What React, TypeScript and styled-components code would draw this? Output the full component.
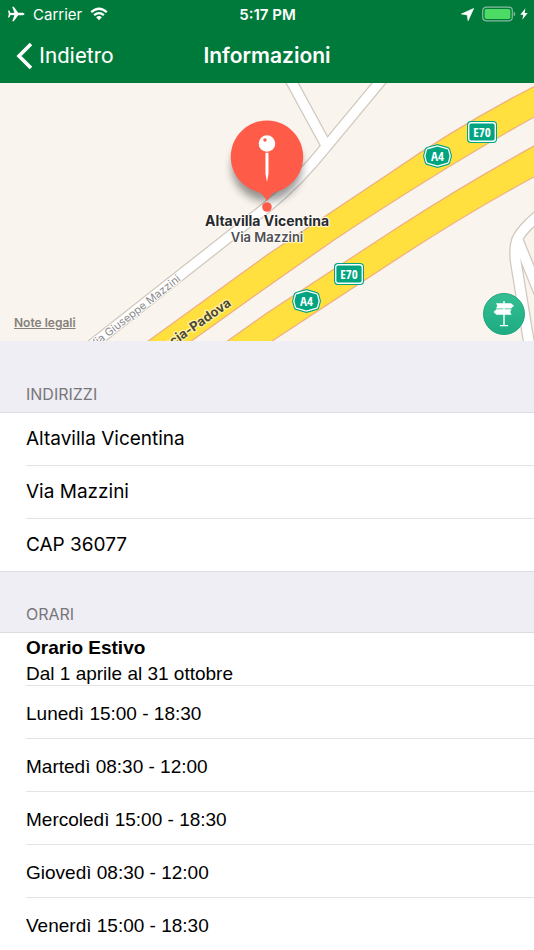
import React from "react";
import styled, { createGlobalStyle } from "styled-components";

const GlobalStyle = createGlobalStyle`
  *, *::before, *::after { box-sizing: border-box; }
  body {
    margin: 0;
    background: #efeef4;
    font-family: Inter, "Liberation Sans", sans-serif;
    color: #000;
  }
`;

const Header = styled.header`
  background: #007a3b;
  color: #fff;
`;

const StatusBar = styled.div`
  display: grid;
  grid-template-columns: 1fr auto 1fr;
  align-items: center;
  height: 28px;
  padding: 0 6px 0 7px;
  font-size: 15px;
`;

const StatusGroup = styled.div<{ $end?: boolean }>`
  display: flex;
  align-items: center;
  gap: 8px;
  justify-content: ${(p) => (p.$end ? "flex-end" : "flex-start")};
`;

const Clock = styled.time`
  font-weight: 600;
`;

const Battery = styled.span`
  display: flex;
  align-items: center;
  gap: 4px;
`;

const NavBar = styled.nav`
  display: grid;
  grid-template-columns: 1fr auto 1fr;
  align-items: center;
  height: 55px;
  padding: 0 16px;
`;

const BackButton = styled.button`
  display: flex;
  align-items: center;
  gap: 6px;
  justify-self: start;
  padding: 0;
  border: 0;
  background: none;
  color: inherit;
  font-family: Roboto, sans-serif;
  font-size: 22px;
  line-height: 28px;
  cursor: pointer;
`;

const Title = styled.h1`
  margin: 0;
  font-size: 21px;
  line-height: 28px;
  font-weight: 600;
`;

const MapArea = styled.section`
  position: relative;
  height: 258px;
  overflow: hidden;
  background: #f9f4ed;
`;

const MapDrawing = styled.svg`
  display: block;
  width: 100%;
  height: 100%;
`;

const Marker = styled.div`
  position: absolute;
  left: 50%;
  top: 32px;
  transform: translateX(-50%);
  display: flex;
  flex-direction: column;
  align-items: center;
  white-space: nowrap;
  text-shadow: 0 0 2px #fff, 1px 0 1px #fff, -1px 0 1px #fff, 0 1px 1px #fff, 0 -1px 1px #fff;
`;

const MarkerName = styled.strong`
  font-size: 14px;
  line-height: 16px;
  font-weight: 700;
  color: #29292b;
`;

const MarkerStreet = styled.span`
  font-size: 13px;
  line-height: 16px;
  font-weight: 600;
  color: #505052;
`;

const LegalLink = styled.a`
  position: absolute;
  left: 14px;
  bottom: 10px;
  font-size: 12px;
  line-height: 16px;
  font-weight: 600;
  color: #85817b;
`;

const DirectionsButton = styled.button`
  position: absolute;
  right: 9px;
  bottom: 6px;
  display: grid;
  place-items: center;
  width: 42px;
  height: 42px;
  padding: 0;
  border: 1px solid #1ca67c;
  border-radius: 50%;
  background: linear-gradient(#35bd93, #1eac82);
  cursor: pointer;
`;

const SectionHeader = styled.h2<{ $first?: boolean }>`
  display: flex;
  align-items: flex-end;
  height: ${(p) => (p.$first ? 72 : 61)}px;
  margin: 0;
  padding: 0 26px 8px;
  border-bottom: 1px solid #dddce1;
  font-size: 16px;
  line-height: 20px;
  font-weight: 400;
  color: #77767b;
`;

const List = styled.ul<{ $helvetica?: boolean; $closed?: boolean }>`
  margin: 0;
  padding: 0;
  list-style: none;
  background: #fff;
  border-bottom: ${(p) => (p.$closed ? "1px solid #dddce1" : "0")};
  font-family: ${(p) => (p.$helvetica ? '"Liberation Sans", sans-serif' : 'Inter, sans-serif')};
  font-size: 19px;
  line-height: 26px;
`;

const Row = styled.li<{ $lowered?: boolean }>`
  display: flex;
  flex-direction: column;
  justify-content: center;
  height: 52px;
  margin-left: 26px;
  padding-top: ${(p) => (p.$lowered ? 4 : 0)}px;

  &:not(:last-child) {
    height: 53px;
    border-bottom: 1px solid #e4e4e6;
  }
`;

const addresses = ["Altavilla Vicentina", "Via Mazzini", "CAP 36077"];
const hours = [
  "Lunedì 15:00 - 18:30",
  "Martedì 08:30 - 12:00",
  "Mercoledì 15:00 - 18:30",
  "Giovedì 08:30 - 12:00",
  "Venerdì 15:00 - 18:30",
];

const localRoads = [
  "M384 -6 L326 64 Q298 99 267 124 L178 194 L88 265",
  "M290 -4 L326 62",
  "M542 129 L529 141 Q519 151 517 157 Q514 166 516 180 L530 266",
  "M517 155 L541 214",
];
const motorways = [
  "M545 -2 Q465 38 387 92 L267 172 L140 264 L183 264 L267 204 L334 157 Q452 79 545 28 Z",
  "M545 57 Q470 98 400 143 L267 230 L219 264 L263 264 L400 174 Q475 125 545 88 Z",
];

function EuroShield({ x, y }: { x: number; y: number }) {
  return (
    <g transform={`translate(${x} ${y})`}>
      <rect width="30" height="22" rx="4" fill="#00a481" />
      <rect x="1.7" y="1.7" width="26.6" height="18.6" rx="2.5" fill="none" stroke="#fff" strokeWidth="1.4" />
      <ShieldText x={15}>E70</ShieldText>
    </g>
  );
}

function MotorwayShield({ x, y }: { x: number; y: number }) {
  return (
    <g transform={`translate(${x} ${y})`}>
      <path d="M4 3 L14.5 0 L25 3 Q27 3.500 27.300 5.500 L29 12 L27.300 18.500 Q27 20.500 25 21 L14.500 24 L4 21 Q2 20.500 1.700 18.500 L0 12 L1.700 5.500 Q2 3.500 4 3Z" fill="#00a481" />
      <path d="M5 4.500 L14.500 1.900 L24 4.500 Q25.500 5 25.800 6.300 L27.200 12 L25.800 17.700 Q25.500 19 24 19.500 L14.500 22.100 L5 19.500 Q3.500 19 3.200 17.700 L1.800 12 L3.200 6.300 Q3.500 5 5 4.500Z" fill="none" stroke="#fff" strokeWidth="1.3" />
      <ShieldText x={14.5} y={17}>A4</ShieldText>
    </g>
  );
}

function ShieldText({ x, y = 16, children }: { x: number; y?: number; children: string }) {
  return (
    <text x={x} y={y} textAnchor="middle" fill="#fff" fontFamily='"Open Sans Condensed", Roboto, sans-serif' fontSize="13" fontWeight="700">
      {children}
    </text>
  );
}

function StreetMap() {
  return (
    <MapDrawing viewBox="0 0 534 258" preserveAspectRatio="xMidYMid slice" aria-label="Mappa di Altavilla Vicentina">
      <g fill="none" stroke="#d0c8bd" strokeWidth="12">
        {localRoads.map((d) => <path key={d} d={d} />)}
      </g>
      <g fill="none" stroke="#fff" strokeWidth="9.5">
        {localRoads.map((d) => <path key={d} d={d} />)}
      </g>
      <g fill="#ffe03f" stroke="#efae80" strokeWidth="1.2">
        {motorways.map((d) => <path key={d} d={d} />)}
      </g>
      <g stroke="#fff" strokeLinejoin="round" paintOrder="stroke">
        <text transform="translate(182 198) rotate(-38)" textAnchor="end" y="-1" fontFamily="Inter, sans-serif" fontSize="11" fill="#8a8a8c" strokeWidth="2">
          Via Giuseppe Mazzini
        </text>
        <text transform="translate(232 222) rotate(-35)" textAnchor="end" fontFamily="Inter, sans-serif" fontSize="13" fontWeight="700" fill="#4c4833" stroke="#fff3a6" strokeWidth="2.500">
          Brescia-Padova
        </text>
      </g>
      <EuroShield x={467} y={38} />
      <MotorwayShield x={423} y={61} />
      <EuroShield x={334} y={180} />
      <MotorwayShield x={292} y={206} />
    </MapDrawing>
  );
}

function Pin() {
  return (
    <svg width="100" height="98" viewBox="0 0 100 98" aria-hidden="true">
      <defs>
        <filter id="pinShadow" x="-30%" y="-30%" width="160%" height="160%">
          <feGaussianBlur stdDeviation="4" />
        </filter>
      </defs>
      <ellipse cx="50" cy="52" rx="35" ry="34" fill="#000" opacity=".4" filter="url(#pinShadow)" />
      <path d="M50 86 Q46 78 40 76.500 A36.200 36.200 0 1 1 60 76.500 Q54 78 50 86Z" fill="#ff5b49" />
      <circle cx="50" cy="92" r="4.800" fill="#ff5b49" />
      <circle cx="50" cy="28.500" r="8.300" fill="#fff" />
      <circle cx="48" cy="25" r="1.700" fill="#ff5b49" />
      <path d="M48.500 37.700h3v21l-1.500 8-1.500-8z" fill="#fff" />
    </svg>
  );
}

export default function App() {
  return (
    <>
      <GlobalStyle />
      <Header>
        <StatusBar>
          <StatusGroup>
            <svg width="18" height="16" viewBox="0 0 18 16" fill="#fff" aria-hidden="true">
              <path d="M17.500 8c0-.7-1.200-1.300-2.500-1.300h-3.800L6.800.8H5.200l2.200 5.900-3.700.2L2.200 4.500H1L1.800 8 1 11.500h1.200l1.500-2.400 3.700.2-2.200 5.900h1.600l4.400-5.900H15c1.300 0 2.500-.6 2.500-1.300z" />
            </svg>
            <span>Carrier</span>
            <svg width="18" height="14" viewBox="0 0 18 14" aria-hidden="true">
              <path d="M1.200 5.200Q9-1.700 16.800 5.200M4.100 8.200Q9 4 13.900 8.200" fill="none" stroke="#fff" strokeWidth="2.300" />
              <path d="M6.100 10.300Q9 7.800 11.900 10.300L9 13.200Z" fill="#fff" />
            </svg>
          </StatusGroup>
          <Clock>5:17 PM</Clock>
          <StatusGroup $end>
            <svg width="13" height="13" viewBox="0 0 13 13" aria-hidden="true">
              <path d="M12.700.4L.3 6l5.900.9.900 5.900z" fill="#fff" stroke="#fff" strokeWidth=".6" strokeLinejoin="round" />
            </svg>
            <Battery>
              <svg width="34" height="16" viewBox="0 0 34 16" aria-hidden="true">
                <rect x=".7" y="1.200" width="29.600" height="13.600" rx="3.500" fill="none" stroke="#85bca0" strokeWidth="1.200" />
                <rect x="2.600" y="3" width="25.800" height="10" rx="1.800" fill="#4cdc64" />
                <path d="M31.700 5.700q1.600.6 1.600 2.300t-1.600 2.300z" fill="#85bca0" />
              </svg>
              <svg width="8" height="12" viewBox="0 0 8 12" aria-hidden="true">
                <path d="M5.400.2L.3 6.700h3L2.300 11.800l5.400-6.700h-3z" fill="#fff" />
              </svg>
            </Battery>
          </StatusGroup>
        </StatusBar>
        <NavBar>
          <BackButton type="button">
            <svg width="17" height="28" viewBox="0 0 17 28" aria-hidden="true">
              <path d="M15 2L3 14l12 12" fill="none" stroke="#fff" strokeWidth="3.600" />
            </svg>
            Indietro
          </BackButton>
          <Title>Informazioni</Title>
        </NavBar>
      </Header>

      <main>
        <MapArea>
          <StreetMap />
          <Marker>
            <Pin />
            <MarkerName>Altavilla Vicentina</MarkerName>
            <MarkerStreet>Via Mazzini</MarkerStreet>
          </Marker>
          <LegalLink href="#legal">Note legali</LegalLink>
          <DirectionsButton type="button" aria-label="Indicazioni stradali">
            <svg width="22" height="26" viewBox="0 0 22 26" fill="#fff" aria-hidden="true">
              <path d="M10.300 0h1.400v24H15v1.200H7V24h3.300z" />
              <path d="M3 2.200h15l3 2.600-3 2.600H3l1.300-2.600z" />
              <path d="M18.500 8.300h-15l-3 2.700 3 2.700h15L17.200 11z" />
            </svg>
          </DirectionsButton>
        </MapArea>

        <section>
          <SectionHeader $first>INDIRIZZI</SectionHeader>
          <List $closed>
            {addresses.map((line) => <Row key={line}>{line}</Row>)}
          </List>
        </section>

        <section>
          <SectionHeader>ORARI</SectionHeader>
          <List $helvetica>
            <Row $lowered>
              <strong>Orario Estivo</strong>
              <span>Dal 1 aprile al 31 ottobre</span>
            </Row>
            {hours.map((line) => <Row key={line} $lowered>{line}</Row>)}
          </List>
        </section>
      </main>
    </>
  );
}
